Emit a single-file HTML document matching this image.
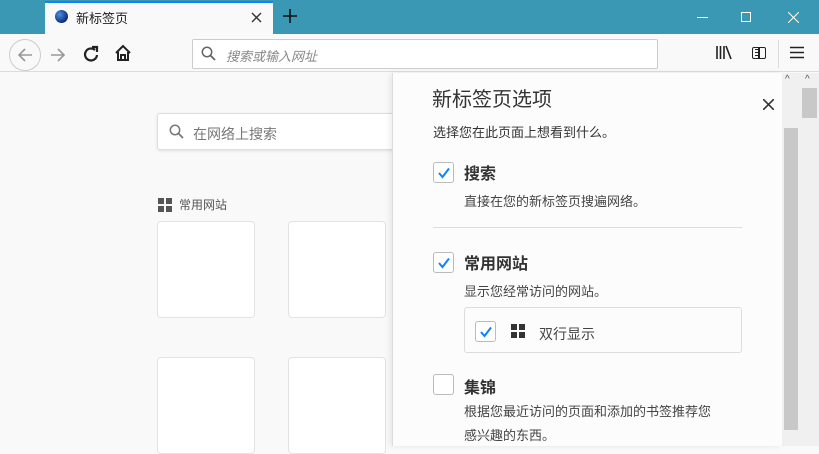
<!DOCTYPE html><html><head><meta charset="utf-8"><style>
*{margin:0;padding:0;box-sizing:border-box}
body{width:819px;height:446px;overflow:hidden;background:#f9f9fa;font-family:"Liberation Sans","Noto Sans CJK SC",sans-serif;position:relative;color:#0c0c0d}
.a{position:absolute}
.cb{position:absolute;width:21px;height:21px;border:1px solid #bbb;border-radius:3px;background:#fff}
.cb svg{position:absolute;left:3px;top:3px}
</style></head><body>
<div class="a" style="left:0;top:0;width:819px;height:34px;background:#3a98b5"></div>
<div class="a" style="left:45px;top:1px;width:228px;height:33px;background:#f9f9fa;border-top:2px solid #0a84ff"></div>
<div class="a" style="left:55px;top:10px;width:13px;height:13px;border-radius:50%;background:radial-gradient(circle at 35% 35%,#4b8fe0,#0b2c7a 70%)"></div>
<div class="a" style="left:76px;top:8px;font-size:13px;color:#222">新标签页</div>
<svg class="a" style="left:251px;top:12px" width="11" height="11"><path d="M1 1L10 10M10 1L1 10" stroke="#333" stroke-width="1.4"/></svg>
<svg class="a" style="left:283px;top:9px" width="14" height="14"><path d="M7 0V14M0 7H14" stroke="#111" stroke-width="1.6"/></svg>
<div class="a" style="left:697px;top:17px;width:11px;height:1px;background:#fff"></div>
<div class="a" style="left:741px;top:12px;width:10px;height:10px;border:1px solid #fff"></div>
<svg class="a" style="left:788px;top:12px" width="11" height="11"><path d="M0 0L11 11M11 0L0 11" stroke="#fff" stroke-width="1"/></svg>
<div class="a" style="left:0;top:34px;width:819px;height:38px;background:#f9f9fa;border-bottom:1px solid #ddd"></div>
<div class="a" style="left:9px;top:39px;width:32px;height:32px;border:1px solid #ccc;border-radius:50%"></div>
<svg class="a" style="left:16px;top:46px" width="18" height="18"><path d="M16 9H3M9 3L3 9L9 15" stroke="#999" stroke-width="1.6" fill="none"/></svg>
<svg class="a" style="left:49px;top:46px" width="18" height="18"><path d="M2 9H15M9 3L15 9L9 15" stroke="#999" stroke-width="1.6" fill="none"/></svg>
<svg class="a" style="left:82px;top:45px" width="18" height="18"><path d="M13 5A6 6 0 1 0 15 10" stroke="#222" stroke-width="2.2" fill="none"/><path d="M10 2H15V7" stroke="#222" stroke-width="2.2" fill="none"/></svg>
<svg class="a" style="left:114px;top:44px" width="18" height="18"><path d="M2 9L9 2L16 9M4 8V16H14V8M7 16V11H11V16" stroke="#222" stroke-width="2" fill="none"/></svg>
<div class="a" style="left:192px;top:39px;width:466px;height:30px;background:#fff;border:1px solid #ccc;border-radius:2px"></div>
<svg class="a" style="left:201px;top:46px" width="16" height="16"><circle cx="6" cy="6" r="4.7" stroke="#666" stroke-width="1.5" fill="none"/><path d="M9.5 9.5L14 14" stroke="#666" stroke-width="1.8"/></svg>
<div class="a" style="left:226px;top:46px;font-size:13px;color:#888;font-style:italic">搜索或输入网址</div>
<svg class="a" style="left:716px;top:45px" width="16" height="15"><path d="M1 1V14M4.5 1V14M8 1V14M10 1L15 14" stroke="#222" stroke-width="1.6"/></svg>
<div class="a" style="left:752px;top:47px;width:14px;height:12px;border:1.5px solid #222;border-radius:2px"></div>
<div class="a" style="left:755px;top:49px;width:4px;height:1px;background:#222;box-shadow:0 3px 0 #222,0 6px 0 #222"></div>
<div class="a" style="left:758px;top:47px;width:1.5px;height:12px;background:#222"></div>
<svg class="a" style="left:790px;top:46px" width="14" height="13"><path d="M0 1.5H14M0 6.5H14M0 11.5H14" stroke="#222" stroke-width="1.5"/></svg>
<div class="a" style="left:778px;top:40px;width:1px;height:28px;background:#ddd"></div>
<div class="a" style="left:157px;top:113px;width:240px;height:37px;background:#fff;border:1px solid #ddd;border-radius:3px;box-shadow:0 1px 3px rgba(0,0,0,.1)"></div>
<svg class="a" style="left:169px;top:124px" width="16" height="16"><circle cx="6" cy="6" r="4.7" stroke="#777" stroke-width="1.5" fill="none"/><path d="M9.5 9.5L14 14" stroke="#777" stroke-width="1.8"/></svg>
<div class="a" style="left:193px;top:124px;font-size:14px;color:#777">在网络上搜索</div>
<svg class="a" style="left:158px;top:198px" width="14" height="14"><rect x="0" y="0" width="6" height="6" fill="#555"/><rect x="8" y="0" width="6" height="6" fill="#555"/><rect x="0" y="8" width="6" height="6" fill="#555"/><rect x="8" y="8" width="6" height="6" fill="#555"/></svg>
<div class="a" style="left:179px;top:196px;font-size:12px;color:#555">常用网站</div>
<div class="a" style="left:157px;top:221px;width:98px;height:97px;background:#fff;border:1px solid #e3e3e3;border-radius:4px"></div>
<div class="a" style="left:288px;top:221px;width:98px;height:97px;background:#fff;border:1px solid #e3e3e3;border-radius:4px"></div>
<div class="a" style="left:157px;top:357px;width:98px;height:97px;background:#fff;border:1px solid #e3e3e3;border-radius:4px"></div>
<div class="a" style="left:288px;top:357px;width:98px;height:97px;background:#fff;border:1px solid #e3e3e3;border-radius:4px"></div>
<div class="a" style="left:392px;top:73px;width:390px;height:373px;background:#fcfcfc;border-left:1px solid #ddd;box-shadow:-2px 0 6px rgba(0,0,0,.08)"></div>
<div class="a" style="left:432px;top:83px;font-size:20px;color:#333">新标签页选项</div>
<svg class="a" style="left:763px;top:99px" width="11" height="11"><path d="M0 0L11 11M11 0L0 11" stroke="#333" stroke-width="1.6"/></svg>
<div class="a" style="left:433px;top:122px;font-size:13px;color:#333">选择您在此页面上想看到什么。</div>
<div class="cb" style="left:433px;top:162px"><svg width="14" height="14"><path d="M2 7L5.5 11L12 2.5" stroke="#0a84ff" stroke-width="2" fill="none"/></svg></div>
<div class="a" style="left:464px;top:160px;font-size:16px;font-weight:bold;color:#333">搜索</div>
<div class="a" style="left:464px;top:191px;font-size:13px;color:#444">直接在您的新标签页搜遍网络。</div>
<div class="a" style="left:433px;top:227px;width:309px;height:1px;background:#ddd"></div>
<div class="cb" style="left:433px;top:252px"><svg width="14" height="14"><path d="M2 7L5.5 11L12 2.5" stroke="#0a84ff" stroke-width="2" fill="none"/></svg></div>
<div class="a" style="left:464px;top:250px;font-size:16px;font-weight:bold;color:#333">常用网站</div>
<div class="a" style="left:464px;top:281px;font-size:13px;color:#444">显示您经常访问的网站。</div>
<div class="a" style="left:464px;top:307px;width:278px;height:46px;border:1px solid #ddd;border-radius:3px;background:#fcfcfc"></div>
<div class="cb" style="left:475px;top:321px"><svg width="14" height="14"><path d="M2 7L5.5 11L12 2.5" stroke="#0a84ff" stroke-width="2" fill="none"/></svg></div>
<svg class="a" style="left:511px;top:324px" width="14" height="14"><rect x="0" y="0" width="6" height="6" fill="#333"/><rect x="8" y="0" width="6" height="6" fill="#333"/><rect x="0" y="8" width="6" height="6" fill="#333"/><rect x="8" y="8" width="6" height="6" fill="#333"/></svg>
<div class="a" style="left:539px;top:324px;font-size:14px;color:#444">双行显示</div>
<div class="cb" style="left:433px;top:374px"></div>
<div class="a" style="left:464px;top:374px;font-size:16px;font-weight:bold;color:#333">集锦</div>
<div class="a" style="left:464px;top:400px;font-size:13px;color:#444;line-height:24px;width:290px">根据您最近访问的页面和添加的书签推荐您<br>感兴趣的东西。</div>
<div class="a" style="left:782px;top:73px;width:18px;height:373px;background:#f0f0f0"></div>
<div class="a" style="left:784px;top:128px;width:14px;height:302px;background:#c8c8c8"></div>
<div class="a" style="left:785px;top:74px;font-size:10px;color:#555">^</div>
<div class="a" style="left:800px;top:73px;width:19px;height:373px;background:#f0f0f0"></div>
<div class="a" style="left:802px;top:88px;width:15px;height:30px;background:#c8c8c8"></div>
<div class="a" style="left:805px;top:74px;font-size:10px;color:#555">^</div>
</body></html>
